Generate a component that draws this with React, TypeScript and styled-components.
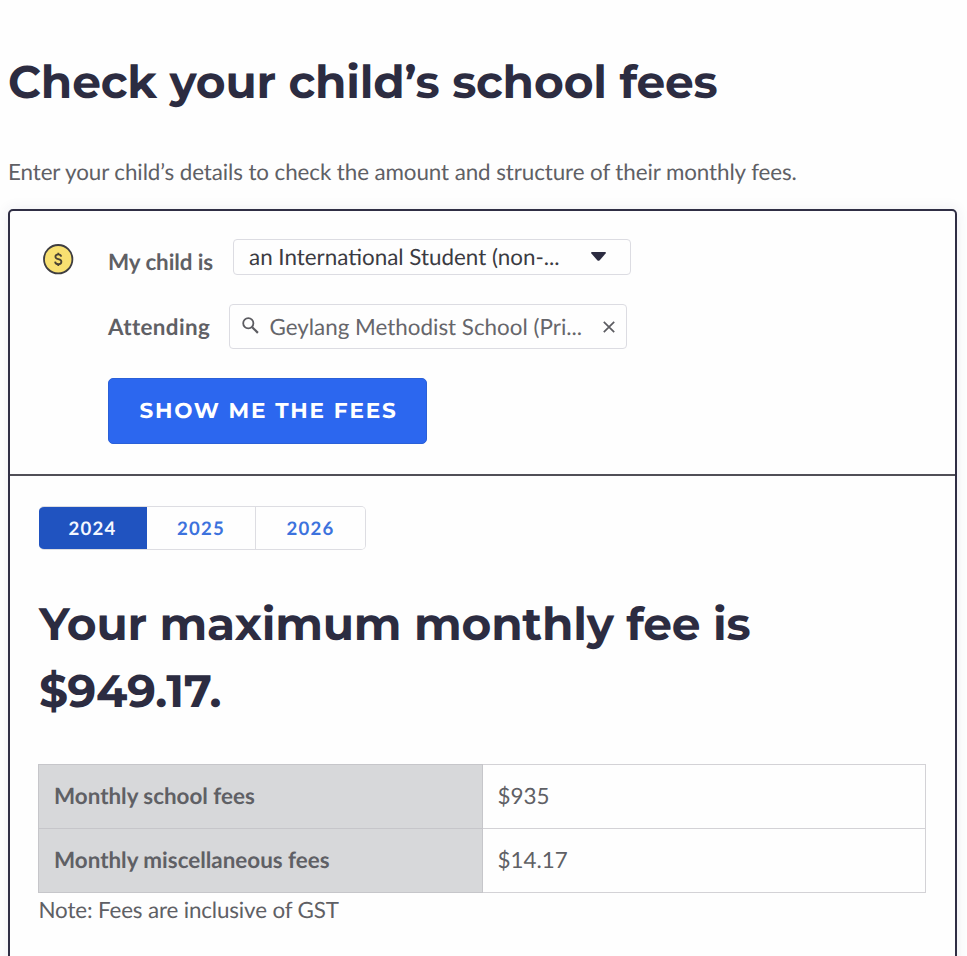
import React from "react";
import styled, { createGlobalStyle } from "styled-components";

const display = `Montserrat, Inter, sans-serif`;

const GlobalStyle = createGlobalStyle`
  *, *::before, *::after { box-sizing: border-box; }
  html { overflow: hidden; background: #fefefe; }
  body {
    margin: 0;
    font-family: Lato, sans-serif;
    font-size: 22.4px;
    color: #5f6065;
    text-rendering: geometricPrecision;
  }
  button { font: inherit; margin: 0; text-rendering: inherit; }
`;

const Page = styled.main`
  height: 956px;
  overflow: hidden;
  padding: 49px 10px 0 8px;
`;

const Title = styled.h1`
  margin: 0;
  height: 67px;
  font: 700 45.5px/67px ${display};
  letter-spacing: -0.2px;
  color: #2c2c41;
  white-space: nowrap;
`;

const Intro = styled.p`
  margin: 39px 0 20px;
  height: 34px;
  line-height: 34px;
  letter-spacing: -0.095px;
  white-space: nowrap;
`;

const Card = styled.section`
  height: 800px;
  border: 2px solid #2f2e44;
  border-radius: 5px;
  background: #fefefe;
  box-shadow: 0 0 14px rgba(50, 50, 100, 0.09);
`;

const Form = styled.form`
  display: flex;
  height: 265px;
  padding: 28px 0 0 33px;
  border-bottom: 2px solid #504f57;
`;

const CoinIcon = styled.svg`
  flex: none;
  width: 31px;
  height: 31px;
  margin: 5px 34px 0 0;
`;

const Fields = styled.div`
  display: flex;
  flex-direction: column;
  align-items: flex-start;
`;

const FieldRow = styled.div<{ $height: number; $gap: number }>`
  display: flex;
  height: ${(p) => p.$height}px;
  margin-bottom: ${(p) => p.$gap}px;
`;

const Label = styled.label<{ $width: number; $track?: number }>`
  width: ${(p) => p.$width}px;
  padding-top: 6px;
  line-height: 34px;
  font-weight: 700;
  letter-spacing: ${(p) => p.$track ?? 0}px;
  white-space: nowrap;
`;

const Control = styled.div<{ $start: number; $end: number; $dark?: boolean }>`
  display: flex;
  align-items: center;
  width: 398px;
  height: 100%;
  padding: 0 ${(p) => p.$end}px 0 ${(p) => p.$start}px;
  border: 1px solid #dcdce2;
  border-radius: 4px;
  color: ${(p) => (p.$dark ? "#3b3b42" : "#66666b")};
`;

const Value = styled.span`
  flex: 1;
  line-height: 34px;
  white-space: nowrap;
`;

const Glyph = styled.svg<{ $w: number; $h: number }>`
  flex: none;
  width: ${(p) => p.$w}px;
  height: ${(p) => p.$h}px;
`;

const SearchGlyph = styled(Glyph)`
  margin: 0 11px 3px 0;
`;

const CaretGlyph = styled(Glyph)`
  margin-bottom: 2px;
`;

const Submit = styled.button`
  width: 319px;
  height: 66px;
  padding: 0 0 0 2px;
  border: 1px solid #2a60d8;
  border-radius: 5px;
  background: #2c67ef;
  color: #fff;
  font: 700 21.6px/64px ${display};
  letter-spacing: 1.8px;
  white-space: nowrap;
`;

const Results = styled.div`
  padding: 30px 29px 0 29px;
`;

const Tabs = styled.div`
  display: flex;
  width: 327px;
  height: 44px;
  border: 1px solid #dddde2;
  border-left: 0;
  border-radius: 5px;
  overflow: hidden;
`;

const Tab = styled.button<{ $active?: boolean }>`
  width: ${(p) => (p.$active ? 108 : 109)}px;
  padding: 0;
  border: 0;
  border-right: 1px solid ${(p) => (p.$active ? "#2053c0" : "#dddde2")};
  background: ${(p) => (p.$active ? "#2053c0" : "#fefefe")};
  color: ${(p) => (p.$active ? "#f4f7ff" : "#3c72dd")};
  font-size: 18.6px;
  font-weight: 700;
  letter-spacing: 1.2px;
  &:last-child { border-right: 0; }
`;

const Amount = styled.h2`
  margin: 41px 0 39px;
  height: 134px;
  font: 700 45.5px/67px ${display};
  letter-spacing: -0.22px;
  color: #2c2c41;
  white-space: nowrap;
`;

const Fees = styled.div`
  margin-left: -1px;
`;

const FeeTable = styled.table`
  width: 888px;
  height: 129px;
  border-collapse: collapse;
  table-layout: fixed;
`;

const FeeName = styled.th`
  padding: 0 15px 2px;
  border: 1px solid #c6c6ca;
  background: #d7d8da;
  text-align: left;
  font-weight: 700;
`;

const FeeValue = styled.td`
  padding: 0 15px 2px;
  border: 1px solid #d3d2d6;
`;

const Note = styled.p`
  margin: 0 0 0 0.5px;
  line-height: 34px;
  letter-spacing: -0.15px;
`;

export default function App() {
  return (
    <Page>
      <GlobalStyle />
      <Title>Check your child’s school fees</Title>
      <Intro>Enter your child’s details to check the amount and structure of their monthly fees.</Intro>
      <Card>
        <Form onSubmit={(e) => e.preventDefault()}>
          <CoinIcon viewBox="0 0 31 31" fill="none">
            <circle cx="15.2" cy="15.2" r="14.2" fill="#f8e071" stroke="#3e3d40" strokeWidth="1.8" />
            <path d="M18.2 12.6c-.2-1.500-1.300-2.300-2.900-2.300-1.700 0-2.900.9-2.900 2.400 0 3.300 6 1.700 6 5 0 1.500-1.300 2.500-3.100 2.500-1.800 0-3.100-1-3.200-2.600M15.300 8.700v1.700M15.300 20.200v1.800" stroke="#4a4334" strokeWidth="1.8" />
          </CoinIcon>
          <Fields>
            <FieldRow $height={36} $gap={29}>
              <Label $width={125} $track={-0.08}>My child is</Label>
              <Control $start={15} $end={23} $dark>
                <Value>an International Student (non-...</Value>
                <CaretGlyph $w={17} $h={11} viewBox="0 0 17 11">
                  <path d="M2 1h13q1.500.2.600 1.500L9.700 9.200q-1.200 1.100-2.400 0L1.400 2.500Q.5 1.200 2 1Z" fill="#2c2c41" />
                </CaretGlyph>
              </Control>
            </FieldRow>
            <FieldRow $height={45} $gap={29}>
              <Label $width={121} $track={0.36}>Attending</Label>
              <Control $start={11.5} $end={11}>
                <SearchGlyph $w={17} $h={17} viewBox="0 0 17 17" fill="none" stroke="#5c5c61">
                  <circle cx="6.300" cy="6.300" r="5.100" strokeWidth="1.800" />
                  <path d="m10.200 10.200 5.700 5.700" strokeWidth="2.200" />
                </SearchGlyph>
                <Value>Geylang Methodist School (Pri...</Value>
                <Glyph $w={12} $h={12} viewBox="0 0 12 12" stroke="#5c5c61" strokeWidth="1.700">
                  <path d="m.8.800 10.400 10.400M11.200.800.800 11.200" />
                </Glyph>
              </Control>
            </FieldRow>
            <Submit type="submit">SHOW ME THE FEES</Submit>
          </Fields>
        </Form>
        <Results>
          <Tabs>
            <Tab $active>2024</Tab>
            <Tab>2025</Tab>
            <Tab>2026</Tab>
          </Tabs>
          <Amount>
            Your maximum monthly fee is
            <br />
            $949.17.
          </Amount>
          <Fees>
            <FeeTable>
              <tbody>
                <tr><FeeName>Monthly school fees</FeeName><FeeValue>$935</FeeValue></tr>
                <tr><FeeName>Monthly miscellaneous fees</FeeName><FeeValue>$14.17</FeeValue></tr>
              </tbody>
            </FeeTable>
            <Note>Note: Fees are inclusive of GST</Note>
          </Fees>
        </Results>
      </Card>
    </Page>
  );
}
